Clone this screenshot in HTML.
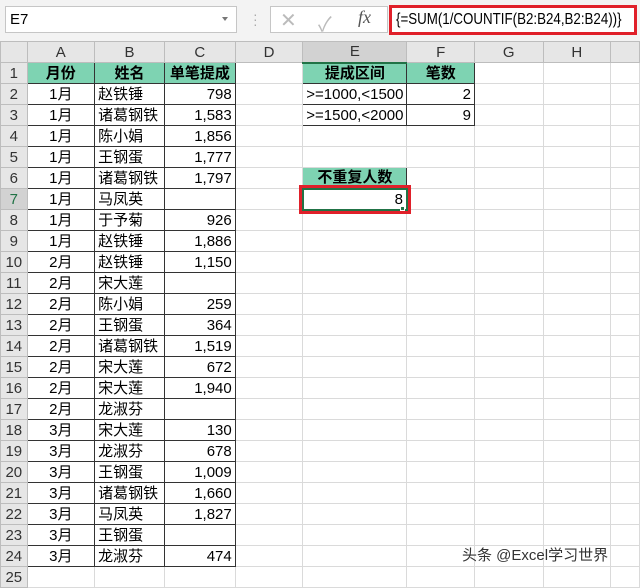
<!DOCTYPE html><html><head><meta charset="utf-8"><style>
body{margin:0;width:640px;height:578px;overflow:hidden;background:#fff;font-family:"Liberation Sans","Noto Sans CJK SC",sans-serif;position:relative}
.a{position:absolute;box-sizing:border-box}
table{position:absolute;left:0;top:41px;border-collapse:collapse;table-layout:fixed}
td{height:21px;padding:0 3px;border:1px solid #dadada;font-size:15px;box-sizing:border-box;white-space:nowrap;overflow:hidden;line-height:19px}
td.h{background:#e6e6e6;color:#333;text-align:center;border-color:#bdbdbd;font-size:15px}
td.r{background:#e6e6e6;color:#333;text-align:center;border-color:#bdbdbd;padding:0}
.g{background:#7ed3b2;font-weight:bold;text-align:center;border:1px solid #333}
.b{border:1px solid #333}
.c{text-align:center}.n{text-align:right}
</style></head><body>
<div class="a" style="left:0;top:0;width:640px;height:41px;background:#f3f3f3"></div>
<div class="a" style="left:5px;top:6px;width:232px;height:27px;background:#fff;border:1px solid #c6c6c6;font-size:15px;padding:4px 4px">E7</div>
<div class="a" style="left:222px;top:17px;width:0;height:0;border-left:3px solid transparent;border-right:3px solid transparent;border-top:4px solid #777"></div>
<div class="a" style="left:253px;top:12px;color:#aaa;font-size:14px;line-height:5px">·<br>·<br>·</div>
<div class="a" style="left:270px;top:6px;width:118px;height:27px;background:#fff;border:1px solid #c6c6c6"></div>
<div class="a" style="left:280px;top:8px;color:#bbb;font-size:20px">✕</div>
<div class="a" style="left:318px;top:8px;color:#bbb;font-size:20px">✓</div>
<div class="a" style="left:358px;top:7px;color:#555;font-size:18px;font-style:italic;font-family:'Liberation Serif',serif">fx</div>
<div class="a" style="left:389px;top:5px;width:248px;height:30px;background:#fff;border:3px solid #e0202a;font-size:15.5px;padding:3px 4px;white-space:nowrap;overflow:hidden"><span style="display:inline-block;transform:scaleX(0.86);transform-origin:0 50%">{=SUM(1/COUNTIF(B2:B24,B2:B24))}</span></div>
<table>
<colgroup><col style="width:27px"><col style="width:69px"><col style="width:70px"><col style="width:71px"><col style="width:70px"><col style="width:97px"><col style="width:69px"><col style="width:71px"><col style="width:70px"><col style="width:30px"></colgroup>
<tr><td class="h" style="padding:0"></td><td class="h">A</td><td class="h">B</td><td class="h">C</td><td class="h">D</td><td class="h" style="background:#d2d2d2;border-bottom:2px solid #217346">E</td><td class="h">F</td><td class="h">G</td><td class="h">H</td><td class="h"></td></tr>
<tr><td class="r">1</td><td class="g">月份</td><td class="g">姓名</td><td class="g">单笔提成</td><td></td><td class="g">提成区间</td><td class="g">笔数</td><td></td><td></td><td></td></tr>
<tr><td class="r">2</td><td class="b c">1月</td><td class="b">赵铁锤</td><td class="b n">798</td><td></td><td class="b">&gt;=1000,&lt;1500</td><td class="b n">2</td><td></td><td></td><td></td></tr>
<tr><td class="r">3</td><td class="b c">1月</td><td class="b">诸葛钢铁</td><td class="b n">1,583</td><td></td><td class="b">&gt;=1500,&lt;2000</td><td class="b n">9</td><td></td><td></td><td></td></tr>
<tr><td class="r">4</td><td class="b c">1月</td><td class="b">陈小娟</td><td class="b n">1,856</td><td></td><td></td><td></td><td></td><td></td><td></td></tr>
<tr><td class="r">5</td><td class="b c">1月</td><td class="b">王钢蛋</td><td class="b n">1,777</td><td></td><td></td><td></td><td></td><td></td><td></td></tr>
<tr><td class="r">6</td><td class="b c">1月</td><td class="b">诸葛钢铁</td><td class="b n">1,797</td><td></td><td class="g">不重复人数</td><td></td><td></td><td></td><td></td></tr>
<tr><td class="r" style="background:#d2d2d2;color:#217346">7</td><td class="b c">1月</td><td class="b">马凤英</td><td class="b n"></td><td></td><td class="n" style="border:2px solid #217346;outline:3px solid #e0202a;outline-offset:1px">8</td><td></td><td></td><td></td><td></td></tr>
<tr><td class="r">8</td><td class="b c">1月</td><td class="b">于予菊</td><td class="b n">926</td><td></td><td></td><td></td><td></td><td></td><td></td></tr>
<tr><td class="r">9</td><td class="b c">1月</td><td class="b">赵铁锤</td><td class="b n">1,886</td><td></td><td></td><td></td><td></td><td></td><td></td></tr>
<tr><td class="r">10</td><td class="b c">2月</td><td class="b">赵铁锤</td><td class="b n">1,150</td><td></td><td></td><td></td><td></td><td></td><td></td></tr>
<tr><td class="r">11</td><td class="b c">2月</td><td class="b">宋大莲</td><td class="b n"></td><td></td><td></td><td></td><td></td><td></td><td></td></tr>
<tr><td class="r">12</td><td class="b c">2月</td><td class="b">陈小娟</td><td class="b n">259</td><td></td><td></td><td></td><td></td><td></td><td></td></tr>
<tr><td class="r">13</td><td class="b c">2月</td><td class="b">王钢蛋</td><td class="b n">364</td><td></td><td></td><td></td><td></td><td></td><td></td></tr>
<tr><td class="r">14</td><td class="b c">2月</td><td class="b">诸葛钢铁</td><td class="b n">1,519</td><td></td><td></td><td></td><td></td><td></td><td></td></tr>
<tr><td class="r">15</td><td class="b c">2月</td><td class="b">宋大莲</td><td class="b n">672</td><td></td><td></td><td></td><td></td><td></td><td></td></tr>
<tr><td class="r">16</td><td class="b c">2月</td><td class="b">宋大莲</td><td class="b n">1,940</td><td></td><td></td><td></td><td></td><td></td><td></td></tr>
<tr><td class="r">17</td><td class="b c">2月</td><td class="b">龙淑芬</td><td class="b n"></td><td></td><td></td><td></td><td></td><td></td><td></td></tr>
<tr><td class="r">18</td><td class="b c">3月</td><td class="b">宋大莲</td><td class="b n">130</td><td></td><td></td><td></td><td></td><td></td><td></td></tr>
<tr><td class="r">19</td><td class="b c">3月</td><td class="b">龙淑芬</td><td class="b n">678</td><td></td><td></td><td></td><td></td><td></td><td></td></tr>
<tr><td class="r">20</td><td class="b c">3月</td><td class="b">王钢蛋</td><td class="b n">1,009</td><td></td><td></td><td></td><td></td><td></td><td></td></tr>
<tr><td class="r">21</td><td class="b c">3月</td><td class="b">诸葛钢铁</td><td class="b n">1,660</td><td></td><td></td><td></td><td></td><td></td><td></td></tr>
<tr><td class="r">22</td><td class="b c">3月</td><td class="b">马凤英</td><td class="b n">1,827</td><td></td><td></td><td></td><td></td><td></td><td></td></tr>
<tr><td class="r">23</td><td class="b c">3月</td><td class="b">王钢蛋</td><td class="b n"></td><td></td><td></td><td></td><td></td><td></td><td></td></tr>
<tr><td class="r">24</td><td class="b c">3月</td><td class="b">龙淑芬</td><td class="b n">474</td><td></td><td></td><td></td><td></td><td></td><td></td></tr>
<tr><td class="r">25</td><td></td><td></td><td></td><td></td><td></td><td></td><td></td><td></td><td></td></tr>
</table>
<div class="a" style="left:400px;top:206px;width:5px;height:5px;background:#217346;border:1px solid #fff"></div>
<div class="a" style="left:462px;top:544px;font-size:15px;color:#333;text-shadow:0 0 2px #fff">头条 @Excel学习世界</div>
</body></html>
